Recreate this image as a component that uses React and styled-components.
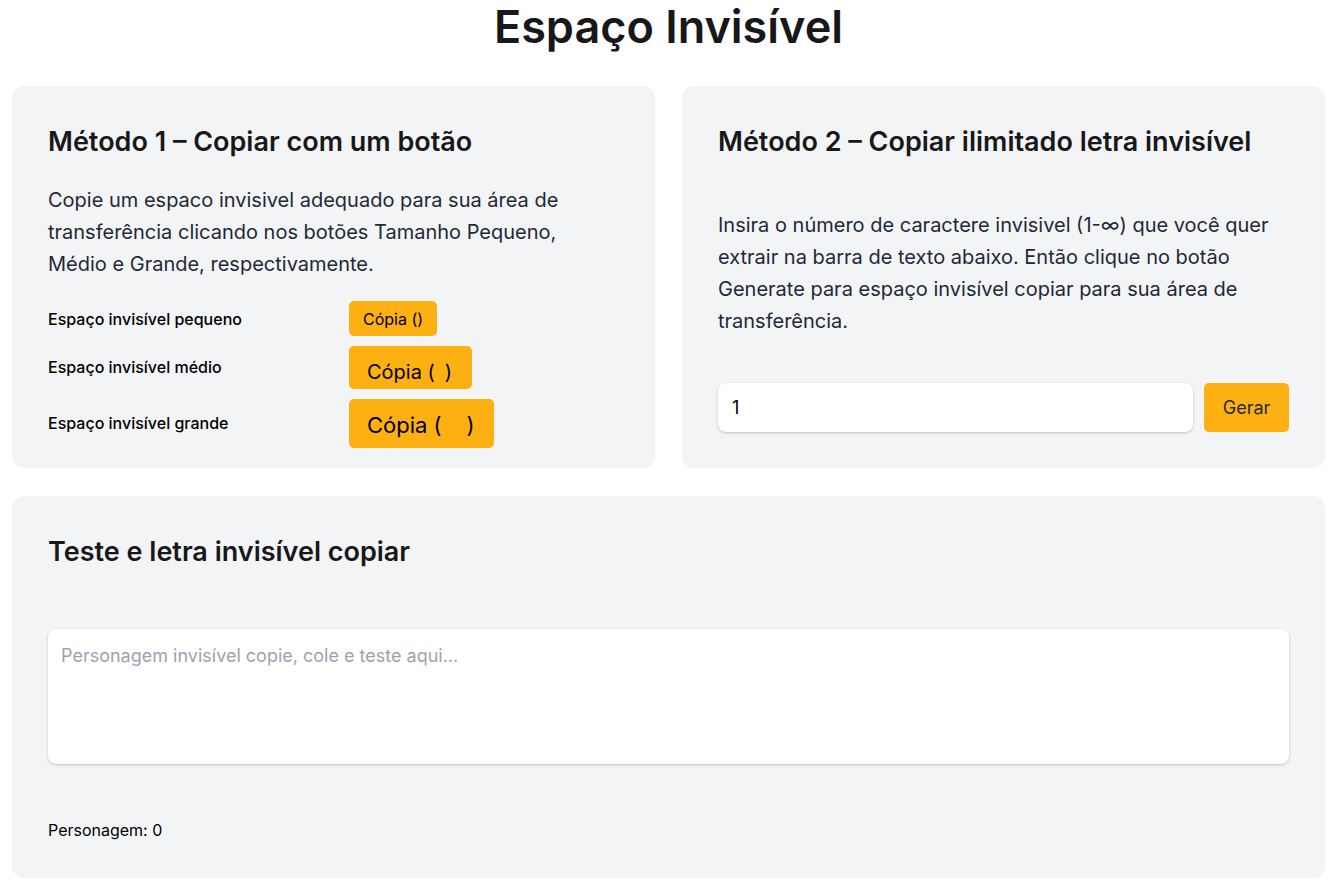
import React, { useState } from "react";
import styled, { createGlobalStyle } from "styled-components";

const GlobalStyle = createGlobalStyle`
  html, body { margin: 0; padding: 0; background: #ffffff; }
  body { font-family: Inter, "Noto Sans", sans-serif; color: #1f2937; }
  * { box-sizing: border-box; }
`;

const Page = styled.main`
  padding: 0 12px 10px 12px;
`;

const Title = styled.h1`
  margin: 0 0 32px;
  font-size: 45px;
  line-height: 54px;
  font-weight: 600;
  text-align: center;
  color: #18181b;
`;

const TopGrid = styled.div`
  display: grid;
  grid-template-columns: 1fr 1fr;
  gap: 27px;
  margin-bottom: 28px;
`;

const Card = styled.section`
  background: #f3f4f6;
  border-radius: 12px;
  padding: ${(p) => p.$pad || "36px"};
  display: flex;
  flex-direction: column;
`;

const CardTitle = styled.h2`
  margin: 0 0 ${(p) => p.$gap || "22px"};
  font-size: 27px;
  line-height: 40px;
  font-weight: 600;
  color: #18181b;
`;

const Text = styled.p`
  margin: 0 0 ${(p) => p.$gap || "21px"};
  font-size: 20px;
  line-height: 32px;
  color: #1f2937;
`;

const CopyList = styled.div`
  display: flex;
  flex-direction: column;
  gap: 10px;
`;

const CopyRow = styled.div`
  display: grid;
  grid-template-columns: 301px auto;
  align-items: center;
`;

const Label = styled.span`
  font-size: 16px;
  line-height: 20px;
  font-weight: 500;
  color: #000;
  margin-top: ${(p) => p.$shift || "0"};
`;

const CopyButton = styled.button`
  justify-self: start;
  border: none;
  background: #fdb011;
  color: #000;
  border-radius: 5px;
  font-family: Inter, sans-serif;
  font-size: ${(p) => p.$size}px;
  height: ${(p) => p.$h}px;
  padding: ${(p) => p.$padT || 0}px ${(p) => p.$padR}px 0 ${(p) => p.$padL}px;
  white-space: pre;
  cursor: pointer;
`;

const GenRow = styled.div`
  display: flex;
  gap: 11px;
  align-items: stretch;
`;

const NumberInput = styled.input`
  flex: 1;
  height: 49px;
  border: none;
  border-radius: 8px;
  background: #fff;
  box-shadow: 0 1px 3px rgba(0, 0, 0, 0.14), 0 1px 2px rgba(0, 0, 0, 0.08);
  padding: 0 14px;
  font-family: Inter, sans-serif;
  font-size: 18px;
  color: #000;
  outline: none;
`;

const GenButton = styled.button`
  width: 85px;
  height: 49px;
  border: none;
  border-radius: 5px;
  background: #fdb011;
  color: #1f2937;
  font-family: Inter, sans-serif;
  font-size: 18px;
  cursor: pointer;
`;

const TestArea = styled.textarea`
  width: 100%;
  height: 135px;
  border: none;
  border-radius: 8px;
  background: #fff;
  box-shadow: 0 1px 3px rgba(0, 0, 0, 0.14), 0 1px 2px rgba(0, 0, 0, 0.08);
  padding: 13px 13px;
  font-family: Inter, sans-serif;
  font-size: 18px;
  line-height: 28px;
  color: #000;
  resize: none;
  outline: none;
  display: block;
  &::placeholder { color: #9ca3af; }
`;

const Counter = styled.div`
  margin-top: 54px;
  font-size: 16px;
  line-height: 24px;
  color: #000;
`;

export default function App() {
  const [count, setCount] = useState("1");
  const [test, setTest] = useState("");
  return (
    <Page>
      <GlobalStyle />
      <Title>Espaço Invisível</Title>
      <TopGrid>
        <Card $pad="36px 36px 20px">
          <CardTitle>Método 1 – Copiar com um botão</CardTitle>
          <Text>
            Copie um espaco invisivel adequado para sua área de transferência clicando nos botões Tamanho Pequeno, Médio e Grande, respectivamente.
          </Text>
          <CopyList>
            <CopyRow>
              <Label>Espaço invisível pequeno</Label>
              <CopyButton $size={16} $h={35} $padL={14} $padR={14}>Cópia ()</CopyButton>
            </CopyRow>
            <CopyRow>
              <Label $shift="-2px">Espaço invisível médio</Label>
              <CopyButton $size={20} $h={43} $padL={18} $padR={20} $padT={8}>{"Cópia (\u2002)"}</CopyButton>
            </CopyRow>
            <CopyRow>
              <Label $shift="-2px">Espaço invisível grande</Label>
              <CopyButton $size={22} $h={49} $padL={18} $padR={20} $padT={3}>{"Cópia (\u00a0\u00a0\u00a0\u00a0)"}</CopyButton>
            </CopyRow>
          </CopyList>
        </Card>
        <Card $pad="36px 36px 35px">
          <CardTitle $gap="47px">Método 2 – Copiar ilimitado letra invisível</CardTitle>
          <Text $gap="46px">
            Insira o número de caractere invisivel (1-∞) que você quer extrair na barra de texto abaixo. Então clique no botão Generate para espaço invisível copiar para sua área de transferência.
          </Text>
          <GenRow>
            <NumberInput type="number" value={count} onChange={(e) => setCount(e.target.value)} />
            <GenButton>Gerar</GenButton>
          </GenRow>
        </Card>
      </TopGrid>
      <Card $pad="36px 36px 36px">
        <CardTitle $gap="57px">Teste e letra invisível copiar</CardTitle>
        <TestArea
          placeholder="Personagem invisível copie, cole e teste aqui..."
          value={test}
          onChange={(e) => setTest(e.target.value)}
        />
        <Counter>Personagem: {test.length}</Counter>
      </Card>
    </Page>
  );
}
